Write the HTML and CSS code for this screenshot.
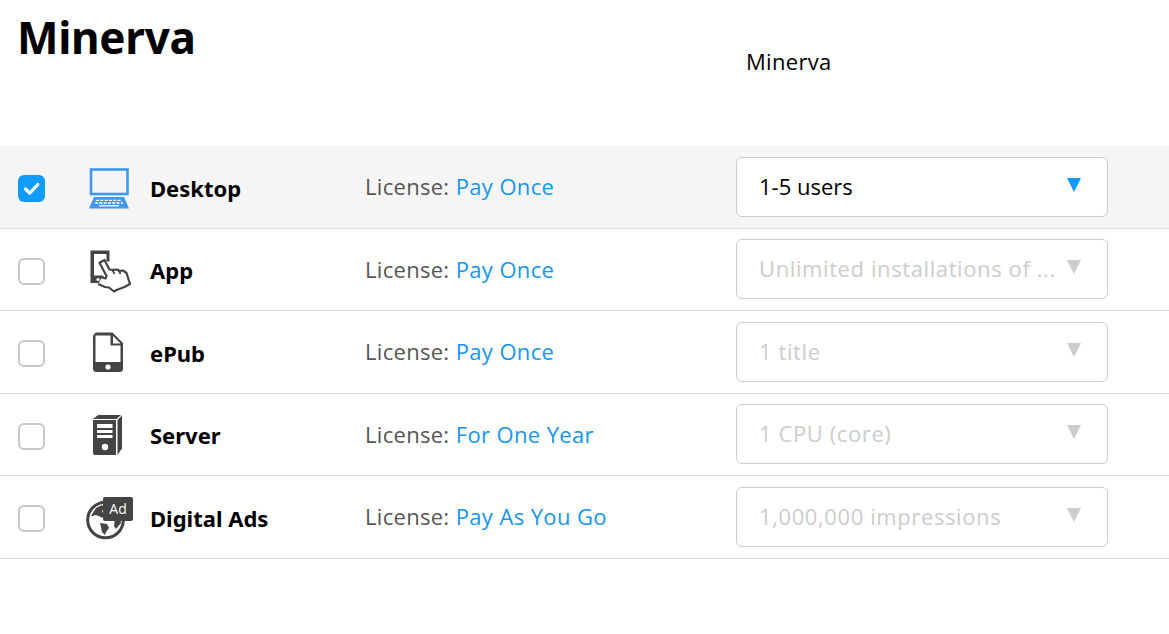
FILE: index.html
```html
<!DOCTYPE html>
<html lang="en">
<head>
<meta charset="utf-8">
<title>Minerva</title>
<link rel="stylesheet" href="styles.css">
</head>
<body>
<header class="head">
  <h1 class="title">Minerva</h1>
  <div class="sub">Minerva</div>
</header>
<section class="list">
  <div class="row active">
    <span class="check on"><svg viewBox="0 0 27 27" width="27" height="27"><path d="M7.500 14l4.200 4.200L19.800 9.500" fill="none" stroke="#fff" stroke-width="3.200" stroke-linecap="round" stroke-linejoin="round"/></svg></span>
    <span class="icon"><svg viewBox="0 0 46 46" width="46" height="46"><rect x="6" y="3.500" width="36.500" height="24.500" fill="none" stroke="#3f98ee" stroke-width="2.600"/><path d="M9 31h30l5 11.500H4z" fill="#3f98ee"/><path d="M11 34.300h26M10 37h28" stroke="#fff" stroke-width="1.300" stroke-dasharray="3 1.300"/><path d="M14 39.800h20" stroke="#fff" stroke-width="1.300"/></svg></span>
    <span class="name">Desktop</span>
    <span class="lic">License: <a>Pay Once</a></span>
    <div class="sel"><span class="val">1-5 users</span><i class="arrow"></i></div>
  </div>
  <div class="row">
    <span class="check"></span>
    <span class="icon"><svg viewBox="0 0 46 46" width="46" height="46"><path d="M5.500 1.500h19v11h-3V5H9v22H5.500z" fill="#444"/><path d="M5.500 26.500h12l8 7.500h-20z" fill="#444"/><circle cx="13" cy="30.500" r="1.600" fill="#fff"/><path d="M13 35l7 3 4 .5 5 4 2.500-1.500 8-3 5.500-3-3.500-11-3.500-2.500-3.500.5-3-1.500-4 .5-3-.5-5-9.500-5 2.800 7 13.200-1 2.500-3.500-1" fill="#fff" stroke="#444" stroke-width="2.200" stroke-linejoin="round"/><path d="M27 20l2.500 5M33 20l2.500 5" stroke="#444" stroke-width="1.700" fill="none"/></svg></span>
    <span class="name">App</span>
    <span class="lic">License: <a>Pay Once</a></span>
    <div class="sel off"><span class="val">Unlimited installations of ...</span><i class="arrow"></i></div>
  </div>
  <div class="row">
    <span class="check"></span>
    <span class="icon"><svg viewBox="0 0 46 46" width="46" height="46"><path d="M12.500 1.500h15L38 12v25.500a3.500 3.500 0 0 1-3.500 3.500h-23A3.500 3.500 0 0 1 8 37.500V6a4.500 4.500 0 0 1 4.500-4.500z" fill="#444"/><path d="M10.500 4.500H25.500v10h10V31h-25z" fill="#fff"/><path d="M28 5l7.500 7.500H28z" fill="#fff"/><circle cx="23" cy="36" r="2.600" fill="#fff"/></svg></span>
    <span class="name">ePub</span>
    <span class="lic">License: <a>Pay Once</a></span>
    <div class="sel off"><span class="val">1 title</span><i class="arrow"></i></div>
  </div>
  <div class="row">
    <span class="check"></span>
    <span class="icon"><svg viewBox="0 0 46 46" width="46" height="46"><path d="M8 6h23v35H10a2 2 0 0 1-2-2z" fill="#444"/><path d="M8 5l5-4h23l-4.500 4z" fill="#444"/><path d="M32.500 6L37 1.500v33L32.500 41z" fill="#444"/><path d="M12 10h15.500v4H12zM12 16h15.500v3H12zM12 21h15.500v3H12z" fill="#fff"/><circle cx="20" cy="33" r="3.200" fill="#fff"/></svg></span>
    <span class="name">Server</span>
    <span class="lic">License: <a>For One Year</a></span>
    <div class="sel off"><span class="val">1 CPU (core)</span><i class="arrow"></i></div>
  </div>
  <div class="row">
    <span class="check"></span>
    <span class="icon"><svg viewBox="0 0 46 46" width="46" height="46"><circle cx="20.500" cy="24" r="17.800" fill="none" stroke="#444" stroke-width="3"/><path d="M6 20l5-8 6-3 3 3-3 3 2 4-2 3-3-2-4-1-2 1zM15 27l7 1 2 4-3 4-1 3-3-3-1-5zM30 23l5-1 1 5-5 6-2-3z" fill="#444"/></svg><span class="badge">Ad</span></span>
    <span class="name">Digital Ads</span>
    <span class="lic">License: <a>Pay As You Go</a></span>
    <div class="sel off"><span class="val">1,000,000 impressions</span><i class="arrow"></i></div>
  </div>
</section>
</body>
</html>
```
FILE: styles.css
```css
html, body { margin: 0; padding: 0; background: #fff; }
body { width: 1169px; height: 634px; overflow: hidden; font-family: "Open Sans", "Noto Sans", sans-serif; color: #000; }
.head { display: grid; grid-template-columns: 728px 1fr; height: 146px; padding-left: 17px; box-sizing: border-box; }
.title { margin: 7px 0 0; font-size: 44px; line-height: 60px; font-weight: 700; font-family: "Noto Sans", sans-serif; letter-spacing: -.3px; }
.sub { margin-top: 46px; margin-left: 1px; font-size: 22px; line-height: 30px; letter-spacing: .3px; }
.row { display: flex; align-items: center; height: 82.5px; box-sizing: border-box; padding-left: 18px; border-bottom: 1px solid #ddd; }
.row.active { background: #f5f5f5; }
.check { flex: none; width: 27px; height: 27px; box-sizing: border-box; border: 2.500px solid #c8c8c8; border-radius: 6px; background: #fff; margin: 4px 40px 0 0; display: flex; }
.check.on { background: #0f9bff; border: 0; }
.icon { flex: none; width: 46px; height: 46px; margin: 5px 19px 0 0; position: relative; }
.icon svg { display: block; }
.badge { position: absolute; left: 18px; top: 1px; width: 30px; height: 24px; background: #444; color: #fff; border-radius: 2px; font-size: 14px; line-height: 23px; text-align: center; }
.name { flex: none; width: 215px; margin-top: 2px; font-size: 22px; font-weight: 700; font-family: "Noto Sans", sans-serif; line-height: 28px; }
.lic { flex: none; width: 371px; margin-top: -1px; font-size: 22px; color: #555; letter-spacing: .3px; word-spacing: .3px; }
.lic a { color: #1795ec; }
.sel { flex: none; width: 372px; height: 60px; box-sizing: border-box; background: #fff; border: 1px solid #ccc; border-radius: 6px; padding: 0 0 2px 22px; display: flex; align-items: center; position: relative; font-size: 22px; }
.sel.off { color: #ccc; letter-spacing: .6px; }
.arrow { position: absolute; right: 26px; top: 20px; width: 0; height: 0; border-left: 7.500px solid transparent; border-right: 7.500px solid transparent; border-top: 14px solid #0f9bff; }
.sel.off .arrow { border-top-color: #ccc; }
```
